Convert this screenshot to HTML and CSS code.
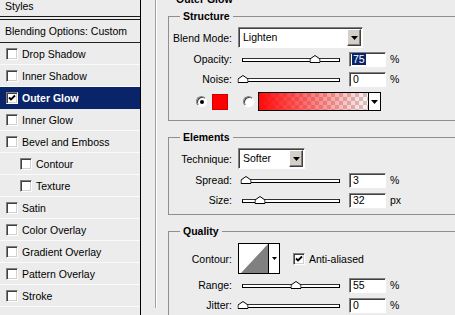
FILE: index.html
```html
<!DOCTYPE html>
<html>
<head>
<meta charset="utf-8">
<title>Layer Style - Outer Glow</title>
<link rel="stylesheet" href="styles.css">
</head>
<body>
<div class="dialog">
  <aside class="styles-panel">
    <div class="styles-title">Styles</div>
    <div class="blend-row">Blending Options: Custom</div>
    <ul class="effects">
      <li class="effect"><span class="cb"></span>Drop Shadow</li>
      <li class="effect"><span class="cb"></span>Inner Shadow</li>
      <li class="effect selected"><span class="cb"><svg width="10" height="10" viewBox="0 0 10 10"><path d="M2 4.5l2 2 4-4" stroke="#000" stroke-width="1.8" fill="none"/></svg></span>Outer Glow</li>
      <li class="effect"><span class="cb"></span>Inner Glow</li>
      <li class="effect"><span class="cb"></span>Bevel and Emboss</li>
      <li class="effect sub"><span class="cb"></span>Contour</li>
      <li class="effect sub"><span class="cb"></span>Texture</li>
      <li class="effect"><span class="cb"></span>Satin</li>
      <li class="effect"><span class="cb"></span>Color Overlay</li>
      <li class="effect"><span class="cb"></span>Gradient Overlay</li>
      <li class="effect"><span class="cb"></span>Pattern Overlay</li>
      <li class="effect"><span class="cb"></span>Stroke</li>
    </ul>
  </aside>

  <main class="main">
    <div class="outer">
      <div class="outer-title">Outer Glow</div>

      <fieldset class="group structure">
        <legend>Structure</legend>
        <div class="row row-select">
          <span class="lbl">Blend Mode:</span>
          <div class="select select-blend"><span class="select-text">Lighten</span><span class="select-btn"><svg width="7" height="4" viewBox="0 0 7 4"><path d="M0 0h7L3.5 4z"/></svg></span></div>
        </div>
        <div class="row row-slider">
          <span class="lbl">Opacity:</span>
          <div class="slider"><div class="rail"><span class="thumb" style="left:75%"><svg width="11" height="8" viewBox="0 0 11 8"><path d="M0.5 7.5V4L5.5 0.5L10.5 4V7.5z" fill="#fff" stroke="#000"/></svg></span></div></div>
          <div class="num"><span class="hl">75</span></div>
          <span class="unit">%</span>
        </div>
        <div class="row row-slider">
          <span class="lbl">Noise:</span>
          <div class="slider"><div class="rail"><span class="thumb" style="left:0%"><svg width="11" height="8" viewBox="0 0 11 8"><path d="M0.5 7.5V4L5.5 0.5L10.5 4V7.5z" fill="#fff" stroke="#000"/></svg></span></div></div>
          <div class="num">0</div>
          <span class="unit">%</span>
        </div>
        <div class="row row-color">
          <span class="radio on"></span>
          <span class="swatch"></span>
          <span class="radio radio2"></span>
          <div class="gradient"><span class="gradient-fill"></span><span class="gradient-btn"><svg width="7" height="4" viewBox="0 0 7 4"><path d="M0 0h7L3.5 4z"/></svg></span></div>
        </div>
      </fieldset>

      <fieldset class="group elements">
        <legend>Elements</legend>
        <div class="row row-select">
          <span class="lbl">Technique:</span>
          <div class="select select-tech"><span class="select-text">Softer</span><span class="select-btn"><svg width="7" height="4" viewBox="0 0 7 4"><path d="M0 0h7L3.5 4z"/></svg></span></div>
        </div>
        <div class="row row-slider">
          <span class="lbl">Spread:</span>
          <div class="slider"><div class="rail"><span class="thumb" style="left:3%"><svg width="11" height="8" viewBox="0 0 11 8"><path d="M0.5 7.5V4L5.5 0.5L10.5 4V7.5z" fill="#fff" stroke="#000"/></svg></span></div></div>
          <div class="num">3</div>
          <span class="unit">%</span>
        </div>
        <div class="row row-slider">
          <span class="lbl">Size:</span>
          <div class="slider"><div class="rail"><span class="thumb" style="left:18%"><svg width="11" height="8" viewBox="0 0 11 8"><path d="M0.5 7.5V4L5.5 0.5L10.5 4V7.5z" fill="#fff" stroke="#000"/></svg></span></div></div>
          <div class="num">32</div>
          <span class="unit">px</span>
        </div>
      </fieldset>

      <fieldset class="group quality">
        <legend>Quality</legend>
        <div class="row row-contour">
          <span class="lbl">Contour:</span>
          <div class="contour">
            <span class="contour-preview"><svg width="29" height="29" viewBox="0 0 29 29"><path d="M2 29L29 0V29z" fill="#808080"/></svg></span>
            <span class="contour-btn"><svg width="5" height="3" viewBox="0 0 5 3"><path d="M0 0h5L2.5 3z"/></svg></span>
          </div>
          <span class="cb cb-aa"><svg width="10" height="10" viewBox="0 0 10 10"><path d="M2 4.5l2 2 4-4" stroke="#000" stroke-width="1.8" fill="none"/></svg></span>
          <span class="aa-text">Anti-aliased</span>
        </div>
        <div class="row row-slider">
          <span class="lbl">Range:</span>
          <div class="slider"><div class="rail"><span class="thumb" style="left:55%"><svg width="11" height="8" viewBox="0 0 11 8"><path d="M0.5 7.5V4L5.5 0.5L10.5 4V7.5z" fill="#fff" stroke="#000"/></svg></span></div></div>
          <div class="num">55</div>
          <span class="unit">%</span>
        </div>
        <div class="row row-slider">
          <span class="lbl">Jitter:</span>
          <div class="slider"><div class="rail"><span class="thumb" style="left:0%"><svg width="11" height="8" viewBox="0 0 11 8"><path d="M0.5 7.5V4L5.5 0.5L10.5 4V7.5z" fill="#fff" stroke="#000"/></svg></span></div></div>
          <div class="num">0</div>
          <span class="unit">%</span>
        </div>
      </fieldset>
    </div>
  </main>
</div>
</body>
</html>
```
FILE: styles.css
```css
* { box-sizing: border-box; }
html, body { margin: 0; padding: 0; }
body {
  background: #ececec;
  font: 10.5px "Liberation Sans", Arial, sans-serif;
  color: #000;
  width: 455px;
  height: 315px;
  overflow: hidden;
}
.dialog { display: flex; width: 462px; height: 315px; }

/* left list */
.styles-panel {
  width: 141px;
  flex: none;
  border-right: 1px solid #000;
  background: #ececec;
}
.styles-title {
  height: 20px;
  border-bottom: 4px double #1a1a1a;
  padding-left: 5px;
  line-height: 12px;
}
.blend-row {
  height: 23px;
  border-bottom: 1px solid #222;
  padding-left: 5px;
  line-height: 22px;
}
.effects { list-style: none; margin: 0; padding: 0; }
.effect {
  height: 22px;
  border-bottom: 1px solid #fafafa;
  display: flex;
  align-items: center;
  gap: 4px;
  padding-left: 6px;
}
.effect.sub { padding-left: 20px; }
.effect.selected { background: #0a246a; color: #fff; font-weight: bold; border-bottom-color: #0a246a; }

.cb {
  width: 12px;
  height: 12px;
  flex: none;
  background: #fff;
  border: 1px solid;
  border-color: #808080 #fff #fff #808080;
  box-shadow: inset 1px 1px #404040, inset -1px -1px #d4d0c8;
  display: flex;
}
.cb svg { display: block; }

/* right side */
.main { flex: 1; padding-left: 14px; }
.outer {
  height: 100%;
  border-left: 1px solid #a0a0a0;
  box-shadow: inset 1px 0 #fff;
  padding-left: 12px;
}
.outer-title {
  font-weight: bold;
  line-height: 13px;
  height: 13px;
  margin: -7px 0 0 8px;
}
.group {
  margin: 10px 0 0;
  padding: 0;
  border: 1px solid #8f8f8f;
  min-width: 0;
}
.structure { margin-top: 4px; padding-bottom: 9px; }
.elements { padding-bottom: 4px; }
.group legend {
  font-weight: bold;
  padding: 0 3px;
  margin-left: 11px;
  line-height: 13px;
}

.row { display: flex; align-items: center; }
.lbl { width: 63px; margin-right: 6px; text-align: right; flex: none; }
.row-select { height: 21px; margin: 4px 0 1px; }
.row-slider { height: 20px; }
.row-contour { height: 31px; margin: 5px 0 1px; }
.row-color { height: 19px; margin-top: 3px; padding-left: 27px; }

.select {
  display: flex;
  height: 21px;
  border: 1px solid;
  border-color: #808080 #fff #fff #808080;
  box-shadow: inset 1px 1px #404040;
  background: #fff;
  padding: 1px;
  flex: none;
}
.select-blend { width: 125px; }
.select-tech { width: 67px; }
.select-text { flex: 1; padding-left: 3px; line-height: 17px; }
.select-btn {
  width: 14px;
  background: #d4d0c8;
  border: 1px solid;
  border-color: #fff #404040 #404040 #fff;
  box-shadow: inset -1px -1px #808080;
  display: flex;
  align-items: center;
  justify-content: center;
}
.select-btn svg, .gradient-btn svg, .contour-btn svg { display: block; }

.slider { width: 106px; height: 20px; padding: 0 4px; flex: none; }
.rail {
  position: relative;
  margin-top: 9px;
  height: 4px;
  border: 1px solid #000;
  border-top-color: #303030;
  background: #fff;
}
.thumb {
  position: absolute;
  top: -4px;
  width: 11px;
  height: 8px;
  transform: translateX(-50%);
}
.thumb svg { display: block; }

.num {
  width: 37px;
  height: 15px;
  margin-left: 5px;
  border: 1px solid;
  border-color: #808080 #fff #fff #808080;
  box-shadow: inset 1px 1px #404040;
  background: #fff;
  padding-left: 3px;
  line-height: 13px;
  flex: none;
}
.hl { background: #0a246a; color: #fff; padding: 0 1px; margin-left: -1px; }
.unit { margin-left: 4px; }

.radio {
  width: 11px;
  height: 11px;
  border-radius: 50%;
  background: #fff;
  border: 1px solid;
  border-color: #808080 #fff #fff #808080;
  box-shadow: inset 1px 1px #404040;
  display: flex;
  align-items: center;
  justify-content: center;
  flex: none;
}
.radio.on::after {
  content: "";
  width: 4px;
  height: 4px;
  border-radius: 50%;
  background: #000;
}
.swatch {
  width: 16px;
  height: 16px;
  margin-left: 5px;
  background: #ff0000;
  border: 1px solid #d00000;
  flex: none;
}
.radio2 { margin-left: 15px; }
.gradient {
  display: flex;
  width: 123px;
  height: 19px;
  margin-left: 4px;
  border: 1px solid #000;
  background: #fff;
  flex: none;
}
.gradient-fill {
  flex: 1;
  background:
    linear-gradient(to right, rgba(255, 10, 10, 1), rgba(255, 30, 30, 0.05)),
    repeating-conic-gradient(#ffffff 0 25%, #cfcfcf 0 50%) 0 0 / 8px 8px;
}
.gradient-btn {
  width: 12px;
  border-left: 1px solid #000;
  background: #fff;
  display: flex;
  align-items: center;
  justify-content: center;
}

.contour {
  display: flex;
  width: 42px;
  height: 31px;
  border: 1px solid #000;
  background: #fff;
  flex: none;
}
.contour-preview { width: 30px; border-right: 1px solid #000; display: block; }
.contour-preview svg { display: block; }
.contour-btn { flex: 1; display: flex; align-items: center; justify-content: center; }
.cb-aa { margin-left: 13px; }
.aa-text { margin-left: 4px; }
```
